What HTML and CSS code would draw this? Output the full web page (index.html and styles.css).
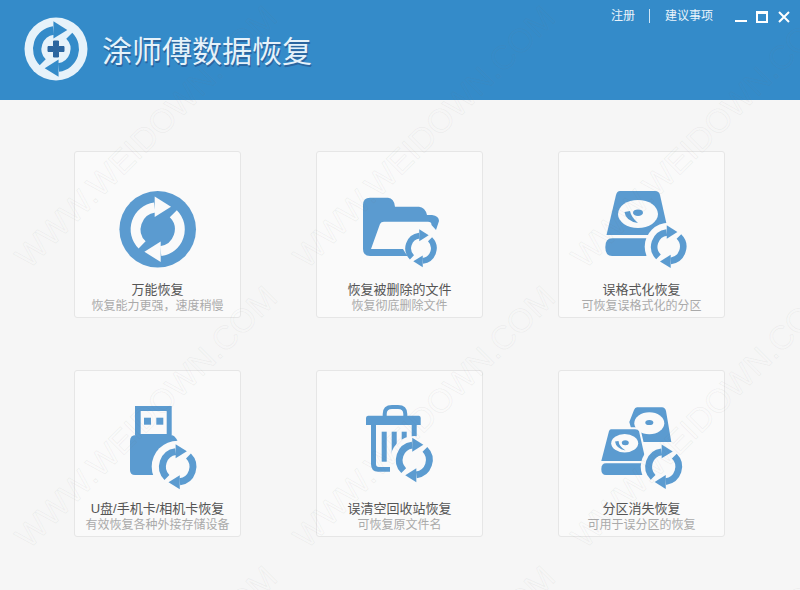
FILE: index.html
```html
<!DOCTYPE html>
<html lang="zh-CN">
<head>
    <meta charset="UTF-8">
    <title>涂师傅数据恢复</title>
    <link rel="stylesheet" href="styles.css">
</head>
<body>
    <div class="app">
        <svg width="0" height="0" class="defs">
            <defs>
                <!-- two arrows, drawn around 0,0 with a mid radius of 22 -->
                <g id="sync">
                    <g id="sync-half">
                        <path d="M-15.6 15.6 A22 22 0 0 1 -3 -21.8" fill="none" stroke="currentColor" stroke-width="10"/>
                        <path d="M-3 -32.7 L13.3 -22.5 L-3 -12.3 Z" fill="currentColor"/>
                    </g>
                    <use href="#sync-half" transform="rotate(180)"/>
                </g>
            </defs>
        </svg>

        <header class="top">
            <div class="brand">
                <svg class="logo" width="64" height="64" viewBox="-32 -32 64 64">
                    <circle r="31.5" class="logo-disc"/>
                    <use href="#sync" class="logo-sync" transform="scale(.85)"/>
                    <path d="M-2.5 -8 h5 v5.5 h5.5 v5 h-5.5 v5.5 h-5 v-5.5 h-5.5 v-5 h5.5 z" class="logo-plus"/>
                </svg>
                <h1>涂师傅数据恢复</h1>
            </div>
            <div class="top-right">
                <nav class="links">
                    <a>注册</a>
                    <span class="sep"></span>
                    <a>建议事项</a>
                </nav>
                <div class="win-btns">
                    <svg class="btn-min" width="12" height="12" viewBox="0 0 12 12"><rect x="0" y="9" width="12" height="2" fill="#fff"/></svg>
                    <svg width="12" height="12" viewBox="0 0 12 12"><path d="M0 0h12v12H0z M2 3v7h8V3z" fill="#fff" fill-rule="evenodd"/></svg>
                    <svg width="12" height="12" viewBox="0 0 12 12"><path d="M1 1 L11 11 M11 1 L1 11" stroke="#fff" stroke-width="2"/></svg>
                </div>
            </div>
        </header>

        <main class="grid">
            <div class="card">
                <svg class="icon" width="165" height="110" viewBox="0 0 165 110">
                    <circle cx="82.7" cy="62.3" r="38.3"/>
                    <use href="#sync" class="white" transform="translate(82.7 62.3)"/>
                </svg>
                <div class="name">万能恢复</div>
                <div class="desc">恢复能力更强，速度稍慢</div>
            </div>

            <div class="card">
                <svg class="icon" width="165" height="110" viewBox="0 0 165 110">
                    <path d="M46 38 Q46 30.7 53 30.7 H71 Q77 31 78 39.7 H102 Q108 40 110 48 H115 Q122 49 122 54 L119 63 L114.5 58 Q114.5 54.7 111 54.7 H67 Q64 54.7 63 57 L54 82 H86 Q88 86 91 89 H53 Q46 89 46 82 Z"/>
                    <use href="#sync" transform="translate(104 81.3) scale(.58)"/>
                </svg>
                <div class="name">恢复被删除的文件</div>
                <div class="desc">恢复彻底删除文件</div>
            </div>

            <div class="card">
                <svg class="icon" width="165" height="110" viewBox="0 0 165 110">
                    <path d="M61 24 H96 Q100 24 101 28 L110 68 H47.5 L57 28 Q58 24 61 24 Z"/>
                    <path d="M53 71.3 H95 V89 H53 Q46.3 89 46.3 80 Q46.3 71.3 53 71.3 Z"/>
                    <ellipse cx="79" cy="47" rx="20" ry="14" class="hole"/>
                    <ellipse cx="79" cy="45.7" rx="5" ry="3.3"/>
                    <path d="M65.5 45 Q66.5 54 79 56 Q72 50 71 44 Z"/>
                    <circle cx="109.7" cy="79.7" r="24" class="halo"/>
                    <use href="#sync" transform="translate(109.7 79.7) scale(.655)"/>
                </svg>
                <div class="name">误格式化恢复</div>
                <div class="desc">可恢复误格式化的分区</div>
            </div>

            <div class="card">
                <svg class="icon" width="165" height="110" viewBox="0 0 165 110">
                    <rect x="60" y="20" width="36.7" height="29"/>
                    <rect x="65.7" y="25" width="26" height="23" class="hole"/>
                    <rect x="69" y="31.7" width="7" height="7"/>
                    <rect x="81.3" y="31.7" width="7" height="7"/>
                    <path d="M61 49 H96 Q100 49 103 56 V89 H60 Q55 89 55 84 V55 Q55 49 61 49 Z"/>
                    <circle cx="102.7" cy="80.7" r="26" class="halo"/>
                    <use href="#sync" transform="translate(102.7 80.7) scale(.69)"/>
                </svg>
                <div class="name">U盘/手机卡/相机卡恢复</div>
                <div class="desc">有效恢复各种外接存储设备</div>
            </div>

            <div class="card">
                <svg class="icon" width="165" height="110" viewBox="0 0 165 110">
                    <path d="M67.7 31 V28 Q67.7 21 75 21 H81 Q88.3 21 88.3 28 V31" class="trash-handle"/>
                    <path d="M51 29.7 H102 Q103.7 30 103.7 32 V39 H49 V32 Q49 30 51 29.7 Z"/>
                    <path d="M54 39 H59 V78 Q59 81 62 81 H73 V85.7 H61 Q54 85.7 54 78 Z"/>
                    <rect x="94.7" y="39" width="5" height="14"/>
                    <rect x="64.7" y="45.7" width="5" height="30"/>
                    <rect x="74.7" y="45.7" width="5" height="24"/>
                    <rect x="84.7" y="45.7" width="5" height="14"/>
                    <circle cx="97.3" cy="74" r="24" class="halo"/>
                    <use href="#sync" transform="translate(97.3 74) scale(.68)"/>
                </svg>
                <div class="name">误清空回收站恢复</div>
                <div class="desc">可恢复原文件名</div>
            </div>

            <div class="card">
                <svg class="icon" width="165" height="110" viewBox="0 0 165 110">
                    <path d="M78 21.3 H103 Q106 21.3 107 25 L112.3 56 H76 L70.3 36 L75 24 Q76 21.3 78 21.3 Z"/>
                    <ellipse cx="90.3" cy="37.3" rx="15" ry="11" class="hole"/>
                    <ellipse cx="90.3" cy="36.5" rx="4" ry="2.6"/>
                    <path d="M52 42.3 H76 Q80 42.3 81 45 L88 76 H41 L49 45 Q50 42.3 52 42.3 Z" class="front"/>
                    <path d="M47 77.3 H86 V89 H47 Q42.3 89 42.3 83 Q42.3 77.3 47 77.3 Z"/>
                    <ellipse cx="65.7" cy="57.3" rx="13.5" ry="9.2" class="hole"/>
                    <ellipse cx="66.3" cy="56.7" rx="3.5" ry="2.5"/>
                    <path d="M56 55.5 Q57 62.5 66.5 64.5 Q60 60.5 59.5 55 Z"/>
                    <circle cx="104.7" cy="80.7" r="23" class="halo"/>
                    <use href="#sync" transform="translate(104.7 80.7) scale(.68)"/>
                </svg>
                <div class="name">分区消失恢复</div>
                <div class="desc">可用于误分区的恢复</div>
            </div>
        </main>

        <svg class="watermark" width="800" height="590" viewBox="0 0 800 590">
            <text transform="translate(29 270) rotate(-45)">WWW.WEIDOWN.COM</text>
            <text transform="translate(307 270) rotate(-45)">WWW.WEIDOWN.COM</text>
            <text transform="translate(585 270) rotate(-45)">WWW.WEIDOWN.COM</text>
            <text transform="translate(29 550) rotate(-45)">WWW.WEIDOWN.COM</text>
            <text transform="translate(307 550) rotate(-45)">WWW.WEIDOWN.COM</text>
            <text transform="translate(585 550) rotate(-45)">WWW.WEIDOWN.COM</text>
            <text transform="translate(29 830) rotate(-45)">WWW.WEIDOWN.COM</text>
            <text transform="translate(307 830) rotate(-45)">WWW.WEIDOWN.COM</text>
            <text transform="translate(585 830) rotate(-45)">WWW.WEIDOWN.COM</text>
        </svg>
    </div>
</body>
</html>
```

FILE: styles.css
```css
* {
    box-sizing: border-box;
}

body {
    margin: 0;
    font-family: "Liberation Sans", "Noto Sans CJK SC", sans-serif;
    background: #f6f6f6;
}

.app {
    position: relative;
    width: 800px;
    height: 590px;
    overflow: hidden;
}

.defs {
    position: absolute;
}

.top {
    height: 100px;
    background: #348bc9;
    display: flex;
    justify-content: space-between;
    padding: 0 10px 0 24px;
}

.brand {
    display: flex;
    align-items: center;
    gap: 14px;
    padding-bottom: 2px;
}

.brand h1 {
    margin: 0;
    font-size: 30px;
    font-weight: 400;
    color: #e6f2fa;
    text-shadow: 1px 2px 0 #2b659f;
}

.logo-disc {
    fill: #e6f2fa;
}

.logo-sync {
    color: #348bc9;
}

.logo-plus {
    fill: #2b659f;
    stroke: #2b659f;
    stroke-linejoin: round;
}

.top-right {
    display: flex;
    align-items: flex-start;
    gap: 22px;
    padding-top: 9px;
}

.links {
    display: flex;
    align-items: center;
    gap: 14px;
    font-size: 12px;
    line-height: 14px;
    color: #eaf4fb;
}

.sep {
    width: 1px;
    height: 14px;
    margin-right: 1px;
    background: #cfe6f6;
}

.win-btns {
    display: flex;
    gap: 10px;
    padding-top: 2px;
}

.btn-min {
    margin-right: -1px;
}

.grid {
    display: grid;
    grid-template-columns: repeat(3, 167px);
    grid-auto-rows: 167px;
    column-gap: 75px;
    row-gap: 52px;
    padding: 51px 0 0 74px;
}

.card {
    display: flex;
    flex-direction: column;
    align-items: center;
    background: #fafafa;
    border: 1px solid #e6e6e6;
    border-radius: 3px;
    padding-top: 15px;
}

.icon {
    display: block;
    flex: none;
    fill: #5b9bd0;
    color: #5b9bd0;
}

.icon .white {
    color: #fafafa;
}

.icon .hole {
    fill: #fafafa;
}

.icon .halo {
    fill: #fafafa;
}

.icon .front {
    stroke: #fafafa;
    stroke-width: 2;
}

.icon .trash-handle {
    fill: none;
    stroke: #5b9bd0;
    stroke-width: 4;
}

.name {
    margin-top: 5px;
    font-size: 13px;
    line-height: 16px;
    color: #555;
    white-space: nowrap;
}

.desc {
    font-size: 12px;
    line-height: 16px;
    color: #aaa;
    white-space: nowrap;
}

.watermark {
    position: absolute;
    left: 0;
    top: 0;
    pointer-events: none;
}

.watermark text {
    font-family: "Liberation Sans", sans-serif;
    font-size: 33px;
    fill: none;
    stroke: rgba(120, 120, 120, 0.07);
    stroke-width: 1;
}
```
